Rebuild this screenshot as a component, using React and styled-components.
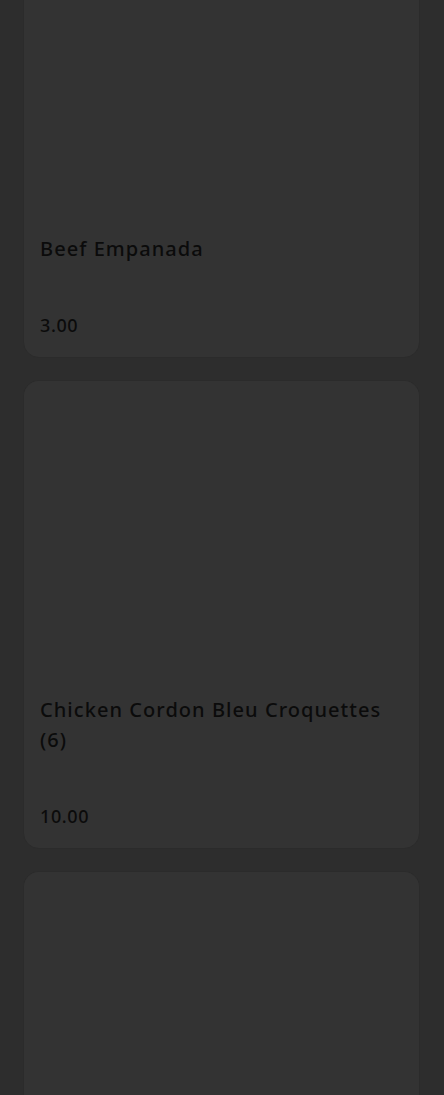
import React from 'react';
import styled, {createGlobalStyle} from 'styled-components';

const Global = createGlobalStyle`
  html, body {
    margin: 0;
    padding: 0;
    background: #2d2d2d;
  }
  * { box-sizing: border-box; }
`;

const Page = styled.div`
  height: 1095px;
  overflow: hidden;
  background: #2d2d2d;
  font-family: 'Noto Sans', 'Open Sans', sans-serif;
`;

const List = styled.div`
  display: flex;
  flex-direction: column;
  gap: 22px;
  padding: 0 24px 0 23px;
  margin-top: -81px;
`;

const Card = styled.div`
  display: flex;
  flex-direction: column;
  background: #333333;
  border: 1px solid #2b2b2b;
  border-radius: 16px;
  overflow: hidden;
`;

const Picture = styled.div`
  height: 298px;
  background: #333333;
`;

const Body = styled.div`
  display: flex;
  flex-direction: column;
  padding: 16px 16px 18px 16px;
`;

const Title = styled.p`
  margin: 0 0 48px 0;
  color: #0b0b0b;
  font-size: 20px;
  line-height: 30px;
  font-weight: 500;
  letter-spacing: 1.05px;
`;

const Price = styled.span`
  color: #0b0b0b;
  font-size: 18px;
  line-height: 27px;
  font-weight: 500;
  letter-spacing: 0.6px;
`;

const items = [
  {name: 'Beef Empanada', price: '3.00'},
  {name: 'Chicken Cordon Bleu Croquettes (6)', price: '10.00'},
  {name: 'Cheese Croquettes (6)', price: '8.00'},
];

function MenuItem({name, price}) {
  return (
    <Card>
      <Picture />
      <Body>
        <Title>{name}</Title>
        <Price>{price}</Price>
      </Body>
    </Card>
  );
}

export default function App() {
  return (
    <Page>
      <Global />
      <List>
        {items.map((it) => (
          <MenuItem key={it.name} name={it.name} price={it.price} />
        ))}
      </List>
    </Page>
  );
}
